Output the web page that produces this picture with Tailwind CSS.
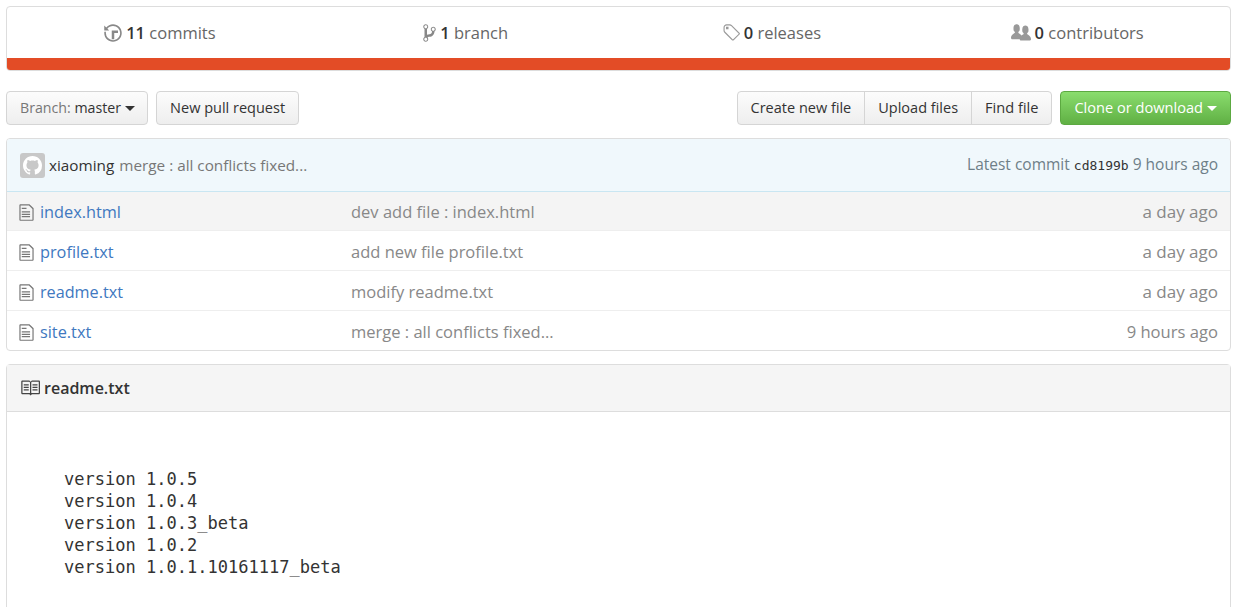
<!DOCTYPE html>
<html lang="en">
  <head>
    <meta charset="UTF-8" />
    <title>learngit</title>
    <script src="https://cdn.jsdelivr.net/npm/@tailwindcss/browser@4"></script>
  </head>
  <body class="h-[607px] overflow-hidden bg-white pl-[6px] pr-[14px] pt-[6px] font-['Open_Sans',sans-serif] text-[16.5px] text-[#333]">
    <!-- numbers summary -->
    <div class="h-[65px] overflow-hidden rounded-[4px] border border-[#ddd]">
      <div class="grid h-[51px] grid-cols-4 pt-[1px] text-[#666]">
        <div class="flex items-center justify-center gap-[4px]">
          <svg class="h-[20px] w-[18px] fill-[#888]" viewBox="0 0 14 16"><path d="M8 13H6V6h5v2H8v5zM7 1C4.81 1 2.87 2.02 1.59 3.59L0 2v4h4L2.5 4.5C3.55 3.17 5.17 2.3 7 2.3c3.14 0 5.7 2.56 5.7 5.7s-2.56 5.7-5.7 5.7A5.71 5.71 0 0 1 1.3 8c0-.34.03-.67.09-1H.08C.03 7.33 0 7.66 0 8c0 3.86 3.14 7 7 7s7-3.14 7-7-3.14-7-7-7z" /></svg>
          <span><b class="font-semibold text-[#333]">11</b> commits</span>
        </div>
        <div class="flex items-center justify-center gap-[4px]">
          <svg class="h-[20px] w-[13px] fill-[#888]" viewBox="0 0 10 16"><path d="M10 5c0-1.11-.89-2-2-2a1.993 1.993 0 0 0-1 3.72v.3c-.02.52-.23.98-.63 1.38-.4.4-.86.61-1.38.63-.83.02-1.48.16-2 .45V4.72a1.993 1.993 0 0 0-1-3.72C.88 1 0 1.89 0 3a2 2 0 0 0 1 1.72v6.56c-.59.35-1 .99-1 1.72 0 1.11.89 2 2 2 1.11 0 2-.89 2-2 0-.53-.2-1-.53-1.36.09-.06.48-.41.59-.47.25-.11.56-.17.94-.17 1.05-.05 1.95-.45 2.75-1.25S8.95 7.77 9 6.73h-.02C9.59 6.37 10 5.73 10 5zM2 1.8c.66 0 1.2.55 1.2 1.2 0 .65-.55 1.2-1.2 1.2C1.35 4.2.8 3.65.8 3c0-.65.55-1.2 1.2-1.2zm0 12.41c-.66 0-1.2-.55-1.2-1.2 0-.65.55-1.2 1.2-1.2.65 0 1.2.55 1.2 1.2 0 .65-.55 1.2-1.2 1.2zm6-8c-.66 0-1.2-.55-1.2-1.2 0-.65.55-1.2 1.2-1.2.65 0 1.2.55 1.2 1.2 0 .65-.55 1.2-1.2 1.2z" /></svg>
          <span><b class="font-semibold text-[#333]">1</b> branch</span>
        </div>
        <div class="flex items-center justify-center gap-[4px]">
          <svg class="h-[20px] w-[18px] fill-[#999]" viewBox="0 0 14 16"><path d="M7.73 1.73C7.26 1.26 6.62 1 5.96 1H3.5C2.13 1 1 2.13 1 3.5v2.47c0 .66.27 1.3.73 1.77l6.06 6.06c.39.39 1.02.39 1.41 0l4.59-4.59a.996.996 0 0 0 0-1.41L7.73 1.73zM2.38 7.09c-.31-.3-.47-.7-.47-1.13V3.5c0-.88.72-1.59 1.59-1.59h2.47c.42 0 .83.16 1.13.47l6.14 6.13-4.73 4.73-6.13-6.15zM3.01 3h2v2H3V3h.01z" /></svg>
          <span><b class="font-semibold text-[#333]">0</b> releases</span>
        </div>
        <div class="flex items-center justify-center gap-[4px]">
          <svg class="h-[20px] w-[20px] fill-[#999]" viewBox="0 0 16 16"><path d="M16 12.999c0 .439-.45 1-1 1H7.995c-.539 0-.994-.447-.995-.999H1c-.54 0-1-.561-1-1 0-2.634 3-4 3-4s.229-.409 0-1c-.841-.621-1.058-.59-1-3 .058-2.419 1.367-3 2.5-3s2.442.58 2.5 3c.058 2.41-.159 2.379-1 3-.229.59 0 1 0 1s1.549.711 2.42 2.088C9.196 9.369 10 8.999 10 8.999s.229-.409 0-1c-.841-.62-1.058-.59-1-3 .058-2.419 1.367-3 2.5-3s2.437.581 2.495 3c.059 2.41-.158 2.38-1 3-.229.59 0 1 0 1s3.005 1.366 3.005 4z" /></svg>
          <span><b class="font-semibold text-[#333]">0</b> contributors</span>
        </div>
      </div>
      <div class="h-[12px] bg-[#e34c26]"></div>
    </div>

    <!-- file navigation -->
    <div class="mt-[20px] flex h-[34px] items-center justify-between text-[14.5px]">
      <div class="flex gap-[8px]">
        <button class="flex h-[34px] items-center gap-[4px] rounded-[4px] border border-[#d5d5d5] bg-gradient-to-b from-[#fcfcfc] to-[#eee] pl-[13px] pr-[12px] text-[14.2px]">
          <span><span class="text-[#777]">Branch:</span> master</span>
          <span class="h-0 w-0 border-x-[5px] border-t-[5px] border-x-transparent border-t-[#333]"></span>
        </button>
        <button class="h-[34px] rounded-[4px] border border-[#d5d5d5] bg-gradient-to-b from-[#fcfcfc] to-[#eee] px-[13px]">New pull request</button>
      </div>
      <div class="flex gap-[8px]">
        <div class="flex">
          <button class="h-[34px] rounded-l-[4px] border border-[#d5d5d5] bg-gradient-to-b from-[#fcfcfc] to-[#eee] px-[13px]">Create new file</button>
          <button class="-ml-px h-[34px] border border-[#d5d5d5] bg-gradient-to-b from-[#fcfcfc] to-[#eee] px-[13px]">Upload files</button>
          <button class="-ml-px h-[34px] rounded-r-[4px] border border-[#d5d5d5] bg-gradient-to-b from-[#fcfcfc] to-[#eee] px-[13px] text-[14.6px]">Find file</button>
        </div>
        <button class="flex h-[34px] items-center gap-[4px] rounded-[4px] border border-[#5ca941] bg-gradient-to-b from-[#8add6d] to-[#60b044] px-[13px] text-[14.6px] text-white">
          Clone or download
          <span class="h-0 w-0 border-x-[5px] border-t-[5px] border-x-transparent border-t-white"></span>
        </button>
      </div>
    </div>

    <!-- commit tease + files -->
    <div class="mt-[13px] overflow-hidden rounded-[4px] border border-[#ddd]">
      <div class="-mx-px -mt-px flex h-[54px] items-center justify-between border border-[#c9e6f2] bg-[#f0f8fc] px-[13px] text-[15.3px]">
        <div class="flex items-center gap-[4px]">
          <span class="flex h-[25px] w-[25px] items-center justify-center rounded-[3px] bg-[#c8c8c8]">
            <svg class="h-[19px] w-[19px] fill-white" viewBox="0 0 16 16"><path d="M8 0C3.58 0 0 3.58 0 8c0 3.54 2.29 6.53 5.47 7.59.4.07.55-.17.55-.38 0-.19-.01-.82-.01-1.49-2.01.37-2.53-.49-2.69-.94-.09-.23-.48-.94-.82-1.13-.28-.15-.68-.52-.01-.53.63-.01 1.08.58 1.23.82.72 1.21 1.87.87 2.33.66.07-.52.28-.87.51-1.07-1.78-.2-3.64-.89-3.64-3.95 0-.87.31-1.59.82-2.15-.08-.2-.36-1.02.08-2.12 0 0 .67-.21 2.2.82.64-.18 1.32-.27 2-.27.68 0 1.36.09 2 .27 1.53-1.04 2.2-.82 2.2-.82.44 1.1.16 1.92.08 2.12.51.56.82 1.27.82 2.15 0 3.07-1.87 3.75-3.65 3.95.29.25.54.73.54 1.48 0 1.07-.01 1.93-.01 2.2 0 .21.15.46.55.38A8.013 8.013 0 0 0 16 8c0-4.42-3.58-8-8-8z" /></svg>
          </span>
          <span>xiaoming <span class="ml-[1px] text-[#777]">merge : all conflicts fixed...</span></span>
        </div>
        <div class="-mr-px text-[15.5px] text-[#6e7f88]">
          Latest commit <span class="font-['DejaVu_Sans_Mono',monospace] text-[13px] text-[#333]">cd8199b</span> 9 hours ago
        </div>
      </div>
      <div class="flex h-[38px] items-center bg-[#f4f4f4] px-[12px] pt-[2px] leading-[24px]">
        <svg class="h-[19px] w-[15px] fill-[#777]" viewBox="0 0 12 16"><path d="M6 5H2V4h4v1zM2 8h7V7H2v1zm0 2h7V9H2v1zm0 2h7v-1H2v1zm10-7.5V14c0 .55-.45 1-1 1H1c-.55 0-1-.45-1-1V2c0-.55.45-1 1-1h7.5L12 4.5zM11 5L8 2H1v12h10V5z" /></svg>
        <a class="ml-[6px] w-[311px] text-[16.3px] text-[#4078c0]">index.html</a>
        <span class="flex-1 text-[#888]">dev add file : index.html</span>
        <span class="text-[17px] text-[#888]">a day ago</span>
      </div>
      <div class="flex h-[40px] items-center border-t border-[#eee] px-[12px] pt-[3px] leading-[24px]">
        <svg class="h-[19px] w-[15px] fill-[#777]" viewBox="0 0 12 16"><path d="M6 5H2V4h4v1zM2 8h7V7H2v1zm0 2h7V9H2v1zm0 2h7v-1H2v1zm10-7.5V14c0 .55-.45 1-1 1H1c-.55 0-1-.45-1-1V2c0-.55.45-1 1-1h7.5L12 4.5zM11 5L8 2H1v12h10V5z" /></svg>
        <a class="ml-[6px] w-[311px] text-[16.3px] text-[#4078c0]">profile.txt</a>
        <span class="flex-1 text-[#888]">add new file profile.txt</span>
        <span class="text-[17px] text-[#888]">a day ago</span>
      </div>
      <div class="flex h-[40px] items-center border-t border-[#eee] px-[12px] pt-[3px] leading-[24px]">
        <svg class="h-[19px] w-[15px] fill-[#777]" viewBox="0 0 12 16"><path d="M6 5H2V4h4v1zM2 8h7V7H2v1zm0 2h7V9H2v1zm0 2h7v-1H2v1zm10-7.5V14c0 .55-.45 1-1 1H1c-.55 0-1-.45-1-1V2c0-.55.45-1 1-1h7.5L12 4.5zM11 5L8 2H1v12h10V5z" /></svg>
        <a class="ml-[6px] w-[311px] text-[16.2px] text-[#4078c0]">readme.txt</a>
        <span class="flex-1 text-[#888]">modify readme.txt</span>
        <span class="text-[17px] text-[#888]">a day ago</span>
      </div>
      <div class="flex h-[40px] items-center border-t border-[#eee] px-[12px] pt-[3px] leading-[24px]">
        <svg class="h-[19px] w-[15px] fill-[#777]" viewBox="0 0 12 16"><path d="M6 5H2V4h4v1zM2 8h7V7H2v1zm0 2h7V9H2v1zm0 2h7v-1H2v1zm10-7.5V14c0 .55-.45 1-1 1H1c-.55 0-1-.45-1-1V2c0-.55.45-1 1-1h7.5L12 4.5zM11 5L8 2H1v12h10V5z" /></svg>
        <a class="ml-[6px] w-[311px] text-[16.3px] text-[#4078c0]">site.txt</a>
        <span class="flex-1 text-[#888]">merge : all conflicts fixed...</span>
        <span class="text-[16.6px] text-[#888]">9 hours ago</span>
      </div>
    </div>

    <!-- readme -->
    <div class="mt-[13px] rounded-[4px] border border-[#ddd] pb-[40px]">
      <div class="flex h-[47px] items-center gap-[4px] border-b border-[#ddd] bg-[#f5f5f5] pl-[13px] text-[16px] font-semibold">
        <svg class="h-[20px] w-[20px] fill-[#444]" viewBox="0 0 16 16"><path d="M3 5h4v1H3V5zm0 3h4V7H3v1zm0 2h4V9H3v1zm11-5h-4v1h4V5zm0 2h-4v1h4V7zm0 2h-4v1h4V9zm2-6v9c0 .55-.45 1-1 1H9.5l-1 1-1-1H2c-.55 0-1-.45-1-1V3c0-.55.45-1 1-1h5.5l1 1 1-1H15c.55 0 1 .45 1 1zm-8 .5L7.5 3H2v9h6V3.5zm7-.5H9.5l-.5.5V12h6V3z" /></svg>
        readme.txt
      </div>
      <pre class="pl-[57px] pt-[56px] font-['DejaVu_Sans_Mono',monospace] text-[17.05px] leading-[22px] text-[#333]">version 1.0.5
version 1.0.4
version 1.0.3_beta
version 1.0.2
version 1.0.1.10161117_beta</pre>
    </div>
  </body>
</html>
